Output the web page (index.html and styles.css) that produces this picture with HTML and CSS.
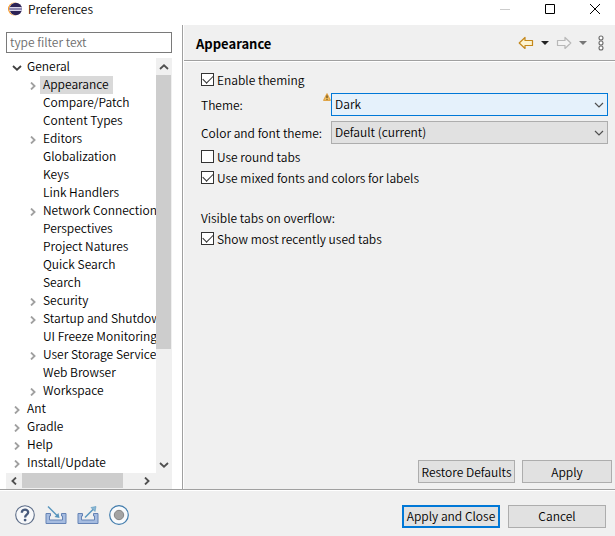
FILE: index.html
```html
<!DOCTYPE html>
<html lang="en">
<head>
<meta charset="utf-8">
<title>Preferences</title>
<link rel="stylesheet" href="styles.css">
</head>
<body>
<svg class="defs" aria-hidden="true">
  <symbol id="right" viewBox="0 0 6 8"><path d="M1 0.5 L4.6 4 L1 7.5" fill="none" stroke="currentColor" stroke-width="1.8"/></symbol>
  <symbol id="down" viewBox="0 0 10 6"><path d="M1 1 L5 4.7 L9 1" fill="none" stroke="currentColor" stroke-width="1.8"/></symbol>
  <symbol id="thin-down" viewBox="0 0 10 6"><path d="M1 1 L5 5 L9 1" fill="none" stroke="currentColor" stroke-width="1.2"/></symbol>
</svg>
<header class="titlebar">
  <svg class="logo" viewBox="0 0 14 14" aria-hidden="true">
    <circle cx="6.5" cy="7" r="6.5" fill="#f7941e"/>
    <circle cx="7.6" cy="7" r="6.4" fill="#fff"/>
    <circle cx="7.8" cy="7" r="6.2" fill="#2c2255"/>
    <path d="M1.7 5.5H13.8M1.7 8.5H13.8" stroke="#d9d6ea" stroke-width="1"/>
    <path d="M1.5 7H14" stroke="#8d87b0" stroke-width="2"/>
  </svg>
  <h1 class="title">Preferences</h1>
  <div class="window-buttons">
    <button class="win" type="button" aria-label="Minimize" disabled><svg width="10" height="10" viewBox="0 0 10 10"><path d="M0 5.5H10" stroke="#ccc"/></svg></button>
    <button class="win" type="button" aria-label="Maximize"><svg width="10" height="10" viewBox="0 0 10 10"><path d="M.5 .5H9.5V9.5H.5Z" fill="none" stroke="#000"/></svg></button>
    <button class="win" type="button" aria-label="Close"><svg width="10" height="10" viewBox="0 0 10 10"><path d="M0 0L10 10M10 0L0 10" stroke="#000"/></svg></button>
  </div>
</header>
<main class="body">
  <nav class="sidebar" aria-label="Preference pages">
    <input class="filter" type="text" placeholder="type filter text" aria-label="Filter">
    <div class="tree-box">
      <ul class="tree">
        <li><div class="row"><button class="twisty open" type="button" aria-label="Collapse General"><svg width="10" height="6"><use href="#down"/></svg></button><span class="item">General</span></div>
          <ul class="branch">
            <li class="row"><button class="twisty" type="button" aria-label="Expand Appearance"><svg width="6" height="8"><use href="#right"/></svg></button><span class="item selected">Appearance</span></li>
            <li class="row leaf"><span class="item">Compare/Patch</span></li>
            <li class="row leaf"><span class="item">Content Types</span></li>
            <li class="row"><button class="twisty" type="button" aria-label="Expand Editors"><svg width="6" height="8"><use href="#right"/></svg></button><span class="item">Editors</span></li>
            <li class="row leaf"><span class="item">Globalization</span></li>
            <li class="row leaf"><span class="item">Keys</span></li>
            <li class="row leaf"><span class="item">Link Handlers</span></li>
            <li class="row"><button class="twisty" type="button" aria-label="Expand Network Connections"><svg width="6" height="8"><use href="#right"/></svg></button><span class="item">Network Connections</span></li>
            <li class="row leaf"><span class="item">Perspectives</span></li>
            <li class="row leaf"><span class="item">Project Natures</span></li>
            <li class="row leaf"><span class="item">Quick Search</span></li>
            <li class="row leaf"><span class="item">Search</span></li>
            <li class="row"><button class="twisty" type="button" aria-label="Expand Security"><svg width="6" height="8"><use href="#right"/></svg></button><span class="item">Security</span></li>
            <li class="row"><button class="twisty" type="button" aria-label="Expand Startup and Shutdown"><svg width="6" height="8"><use href="#right"/></svg></button><span class="item">Startup and Shutdown</span></li>
            <li class="row leaf"><span class="item">UI Freeze Monitoring</span></li>
            <li class="row"><button class="twisty" type="button" aria-label="Expand User Storage Service"><svg width="6" height="8"><use href="#right"/></svg></button><span class="item">User Storage Service</span></li>
            <li class="row leaf"><span class="item">Web Browser</span></li>
            <li class="row"><button class="twisty" type="button" aria-label="Expand Workspace"><svg width="6" height="8"><use href="#right"/></svg></button><span class="item">Workspace</span></li>
          </ul>
        </li>
        <li class="row"><button class="twisty" type="button" aria-label="Expand Ant"><svg width="6" height="8"><use href="#right"/></svg></button><span class="item">Ant</span></li>
        <li class="row"><button class="twisty" type="button" aria-label="Expand Gradle"><svg width="6" height="8"><use href="#right"/></svg></button><span class="item">Gradle</span></li>
        <li class="row"><button class="twisty" type="button" aria-label="Expand Help"><svg width="6" height="8"><use href="#right"/></svg></button><span class="item">Help</span></li>
        <li class="row"><button class="twisty" type="button" aria-label="Expand Install/Update"><svg width="6" height="8"><use href="#right"/></svg></button><span class="item">Install/Update</span></li>
      </ul>
      <div class="vbar">
        <button class="step" type="button" aria-label="Scroll up"><svg class="flip" width="10" height="6"><use href="#down"/></svg></button>
        <div class="vtrack"><div class="vthumb"></div></div>
        <button class="step" type="button" aria-label="Scroll down"><svg width="10" height="6"><use href="#down"/></svg></button>
      </div>
      <div class="hbar">
        <button class="step" type="button" aria-label="Scroll left"><svg class="flip" width="6" height="8"><use href="#right"/></svg></button>
        <div class="htrack"><div class="hthumb"></div></div>
        <button class="step" type="button" aria-label="Scroll right"><svg width="6" height="8"><use href="#right"/></svg></button>
      </div>
    </div>
  </nav>
  <section class="page">
    <header class="page-head">
      <h2 class="page-title">Appearance</h2>
      <div class="tools">
        <button class="tool" type="button" aria-label="Back"><svg width="16" height="14" viewBox="0 0 16 14"><path d="M1.2 7L7 1.5V4.5H14.5V9.5H7V12.5Z" fill="#fdf3cf" stroke="#c4871a" stroke-width="1.2" stroke-linejoin="round"/></svg></button>
        <button class="tool" type="button" aria-label="Back history"><svg width="8" height="4" viewBox="0 0 8 4"><path d="M0 0H8L4 4Z" fill="#222"/></svg></button>
        <button class="tool" type="button" aria-label="Forward"><svg width="16" height="14" viewBox="0 0 16 14"><path d="M14.8 7L9 1.5V4.5H1.5V9.5H9V12.5Z" fill="#f4f4f4" stroke="#b8b8b8" stroke-width="1.2" stroke-linejoin="round"/></svg></button>
        <button class="tool" type="button" aria-label="Forward history"><svg width="8" height="4" viewBox="0 0 8 4"><path d="M0 0H8L4 4Z" fill="#777"/></svg></button>
        <button class="tool menu" type="button" aria-label="View menu"><svg width="6" height="16" viewBox="0 0 6 16"><g fill="#fff" stroke="#6b6b6b" stroke-width="1.1"><circle cx="3" cy="3" r="2"/><circle cx="3" cy="8" r="2"/><circle cx="3" cy="13" r="2"/></g></svg></button>
      </div>
    </header>
    <form class="form">
      <label class="check"><input type="checkbox" checked>Enable theming</label>
      <div class="fields">
        <label for="theme">Theme:</label>
        <div class="combo">
          <svg class="warn" width="8" height="8" viewBox="0 0 8 8"><path d="M4 .8L7.3 7.3H.7Z" fill="#f6c667" stroke="#e0a548" stroke-width="1.2" stroke-linejoin="round"/><path d="M4 2.5V5M4 5.8V6.8" stroke="#4a3510" stroke-width="1.1"/></svg>
          <select id="theme" class="select focus"><option>Dark</option></select>
          <svg class="arrow" width="10" height="6"><use href="#thin-down"/></svg>
        </div>
        <label for="colors">Color and font theme:</label>
        <div class="combo">
          <select id="colors" class="select"><option>Default (current)</option></select>
          <svg class="arrow" width="10" height="6"><use href="#thin-down"/></svg>
        </div>
      </div>
      <label class="check"><input type="checkbox">Use round tabs</label>
      <label class="check"><input type="checkbox" checked>Use mixed fonts and colors for labels</label>
      <fieldset class="group">
        <legend>Visible tabs on overflow:</legend>
        <label class="check"><input type="checkbox" checked>Show most recently used tabs</label>
      </fieldset>
    </form>
    <div class="page-actions">
      <button class="btn restore" type="button">Restore Defaults</button>
      <button class="btn apply" type="button">Apply</button>
    </div>
  </section>
</main>
<footer class="footer">
  <div class="footer-tools">
    <button class="tool" type="button" aria-label="Help"><svg width="20" height="20" viewBox="0 0 20 20"><circle cx="10" cy="10" r="9.3" fill="#f7f8fa" stroke="#5d6d88" stroke-width="1.1"/><path d="M6.8 7.8C6.8 3.7 13.2 3.8 13.2 7.3C13.2 9.6 10.1 9.8 10.1 12.4" fill="none" stroke="#475a7c" stroke-width="2.3"/><circle cx="10.1" cy="15.1" r="1.4" fill="#475a7c"/></svg></button>
    <button class="tool" type="button" aria-label="Import preferences"><svg width="22" height="20" viewBox="0 0 22 20"><path d="M1 8.5H5.5V11H4.5V15H17.5V11H16.5V8.5H21V18.5H1Z" fill="#a6bce0" stroke="#6583b5"/><path d="M3 1.5L13 11.5" stroke="#5795bd" stroke-width="1.4"/><path d="M14.5 13L9.5 12L13.5 8Z" fill="#5795bd"/></svg></button>
    <button class="tool" type="button" aria-label="Export preferences"><svg width="22" height="20" viewBox="0 0 22 20"><path d="M1 8.5H5.5V11H4.5V15H17.5V11H16.5V8.5H21V18.5H1Z" fill="#a6bce0" stroke="#6583b5"/><path d="M8 12.5L17.5 3" stroke="#5795bd" stroke-width="1.4"/><path d="M19 1.5L18 6.5L14 2.5Z" fill="#8db9d5" stroke="#5795bd" stroke-width=".6"/></svg></button>
    <button class="tool" type="button" aria-label="Record preferences"><svg width="20" height="20" viewBox="0 0 20 20"><circle cx="10" cy="10" r="9.3" fill="#f8fafc" stroke="#417cac" stroke-width="1.2"/><circle cx="10" cy="10" r="4.7" fill="#a3a3a3" stroke="#858585"/></svg></button>
  </div>
  <button class="btn default" type="button">Apply and Close</button>
  <button class="btn cancel" type="button">Cancel</button>
</footer>
</body>
</html>
```
FILE: styles.css
```css
* { box-sizing: border-box; }

body {
  display: flex;
  flex-direction: column;
  min-height: 100vh;
  margin: 0;
  background: #fff;
  color: #000;
  font: 350 12px/18px "Noto Sans CJK KR", "Noto Sans", sans-serif;
}

button, input, select { font: inherit; color: inherit; margin: 0; }
button { display: flex; align-items: center; justify-content: center; padding: 0; border: 0; background: none; }
ul { list-style: none; margin: 0; padding: 0; }
svg { display: block; flex: none; }
.defs { position: absolute; width: 0; height: 0; }
.flip { transform: rotate(180deg); }

.titlebar { display: flex; align-items: center; height: 25px; padding: 0 0 8px 8px; }
.logo { width: 14px; height: 14px; }
.title { flex: 1; margin: 0 0 0 6px; font-size: 12px; font-weight: 350; }
.window-buttons { display: flex; margin-right: -2px; }
.win { width: 45px; height: 18px; }

.body { display: flex; flex: 1; border-bottom: 1px solid #a0a0a0; }
.sidebar {
  display: flex;
  flex-direction: column;
  flex: 0 0 183px;
  gap: 5px;
  padding: 7px 10px 0 6px;
  border-right: 1px solid #a0a0a0;
}
.filter { width: 100%; height: 21px; padding: 0 3px 2px; border: 1px solid #7a7a7a; background: #fff; }
.filter::placeholder { color: #6d6d6d; opacity: 1; }
.tree-box {
  display: grid;
  flex: 1;
  grid-template: 1fr 16px / minmax(0, 1fr) 16px;
}
.tree { overflow: hidden; }
.branch { padding-left: 16px; }
.row { display: flex; height: 18px; white-space: nowrap; }
.twisty { flex: none; width: 18px; height: 18px; padding: 2px 0 0 3px; color: #a0a0a0; }
.open { color: #404040; }
.leaf { padding-left: 18px; }
.item { padding: 0 4px 0 3px; line-height: 16px; }
.selected { background: #d9d9d9; }

.vbar { display: flex; flex-direction: column; background: #f0f0f0; color: #505050; }
.step { width: 16px; height: 17px; }
.vtrack, .htrack { flex: 1; }
.vthumb { width: 15px; height: 72%; background: #cdcdcd; }
.hbar { display: flex; grid-column: 1 / 3; padding-right: 17px; background: #f0f0f0; color: #505050; }
.hbar .step { height: 15px; }
.hthumb { width: 86%; height: 15px; background: #cdcdcd; }

.page { display: flex; flex: 1; flex-direction: column; min-width: 0; margin-left: 1px; background: #f0f0f0; }
.page-head {
  display: flex;
  align-items: center;
  justify-content: space-between;
  height: 36px;
  padding: 0 8px 0 12px;
  border-bottom: 1px solid #a0a0a0;
}
.page-title { margin: 0; padding-top: 3px; font-size: 13px; font-weight: 700; }
.tools { display: flex; align-items: center; gap: 7px; padding-right: 3px; }
.menu { margin-left: 4px; }

.form { flex: 1; padding: 7px 7px 0 17px; border-top: 1px solid #fff; }
.check { display: flex; align-items: center; width: fit-content; height: 21px; gap: 3px; }
.check input {
  display: grid;
  place-items: center;
  width: 13px;
  height: 13px;
  border: 1px solid #333;
  background: #fff;
  appearance: none;
}
.check input:checked::before {
  content: "";
  width: 9px;
  height: 5px;
  margin-bottom: 3px;
  border: solid #333;
  border-width: 0 0 1px 1px;
  transform: rotate(-45deg);
}
.fields {
  display: grid;
  grid-template-columns: 126px minmax(0, 1fr);
  align-items: center;
  gap: 5px 4px;
  margin: 3px 0 2px;
  white-space: nowrap;
}
.combo { position: relative; }
.select { display: block; width: 100%; height: 23px; padding: 0 20px 1px 3px; border: 1px solid #adadad; border-radius: 0; background: #e1e1e1; appearance: none; }
.focus { border-color: #0078d7; background: #e5f1fb; }
.arrow { position: absolute; top: 9px; right: 4px; color: #505050; pointer-events: none; }
.warn { position: absolute; top: 0; left: -8px; }
.group { margin: 20px 0 0; padding: 0; border: 0; }
.group legend { padding: 0; line-height: 20px; }

.page-actions { display: flex; justify-content: flex-end; gap: 7px; padding: 0 3px 6px; }
.btn { height: 23px; border: 1px solid #adadad; background: #e1e1e1; white-space: nowrap; }
.restore { width: 97px; }
.apply { width: 90px; }
.footer { display: flex; align-items: center; gap: 8px; height: 46px; padding: 5px 9px 0 15px; background: #f0f0f0; border-top: 1px solid #fff; }
.footer-tools { display: flex; flex: 1; gap: 10px; padding-bottom: 2px; }
.default, .cancel { width: 98px; }
.default { border: 2px solid #0078d7; }
```
